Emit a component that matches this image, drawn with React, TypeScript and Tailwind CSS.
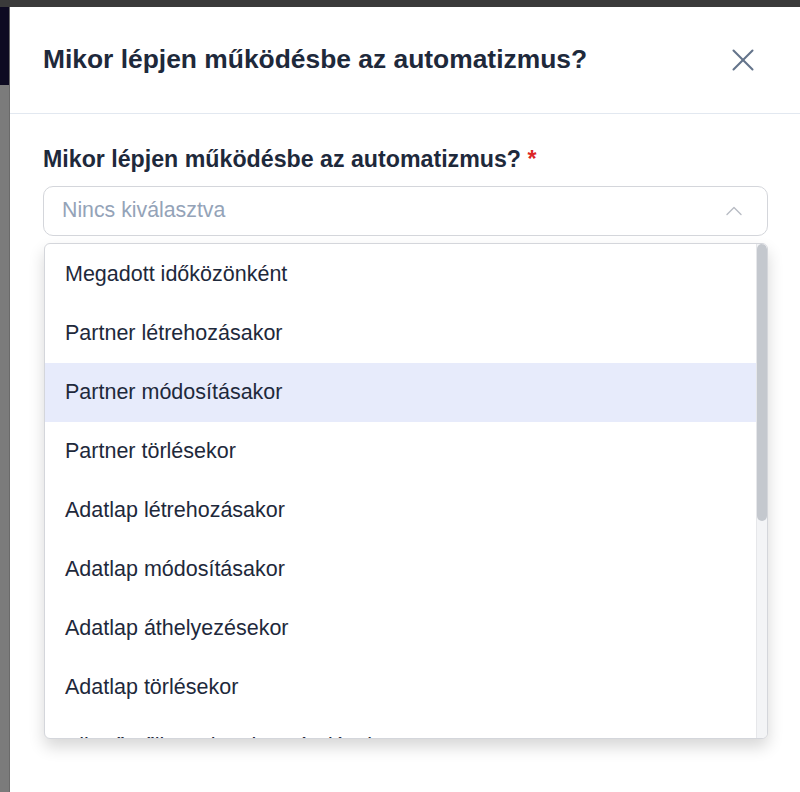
import React from 'react';
import { X, ChevronUp } from 'lucide-react';

const triggers = [
  'Megadott időközönként',
  'Partner létrehozásakor',
  'Partner módosításakor',
  'Partner törlésekor',
  'Adatlap létrehozásakor',
  'Adatlap módosításakor',
  'Adatlap áthelyezésekor',
  'Adatlap törlésekor',
  'Ellenőrzőlista elem hozzáadásakor',
  'Ellenőrzőlista elem törlésekor',
];

export default function App() {
  const [hovered] = React.useState(2);

  return (
    <div
      className="flex h-[792px] w-[800px] flex-col overflow-hidden bg-[#7b7b7b]"
      style={{ fontFamily: '"Liberation Sans", Arial, sans-serif' }}
    >
      {/* dimmed app chrome behind the modal */}
      <div className="h-[7px] shrink-0 bg-[#3a3a3a]" />
      <div className="flex min-h-0 flex-1">
        <div className="flex w-[10px] shrink-0 flex-col border-r border-[#6a6a6a]">
          <div className="h-[78px] bg-[#0e0b22]" />
          <div className="flex-1 bg-[#7b7b7b]" />
        </div>

        <div className="relative flex-1 bg-white">
          <div className="flex h-[107px] items-center justify-between border-b border-[#e2e8f0] pl-[33px] pr-[39px]">
            <h2 className="text-[26.4px] font-bold text-[#1e293b]">Mikor lépjen működésbe az automatizmus?</h2>
            <X className="h-[38px] w-[38px] text-[#64748b]" strokeWidth={1.3} />
          </div>

          <div className="px-[33px] pt-[30px]">
            <label className="block text-[23.2px] font-bold leading-[30px] text-[#1e293b]">
              Mikor lépjen működésbe az automatizmus? <span className="text-[#dc2626]">*</span>
            </label>
            <div className="mt-[12px] flex h-[50px] w-[725px] items-center justify-between rounded-[10px] border border-[#d4d6db] pl-[18px] pr-[19px]">
              <span className="text-[21.3px] text-[#94a3b8]">Nincs kiválasztva</span>
              <ChevronUp className="h-[28px] w-[28px] text-[#b8bcc4]" strokeWidth={1.2} />
            </div>
          </div>

          <div className="absolute left-[34px] top-[236px] h-[496px] w-[724px] overflow-hidden rounded-[6px] border border-[#d4d6db] bg-white shadow-[0_8px_16px_rgba(0,0,0,0.16)]">
            <ul className="pr-[10px] pt-[1px]">
              {triggers.map((t, i) => (
                <li
                  key={t}
                  className={`flex h-[59px] items-center pl-[20px] text-[21.5px] text-[#1e293b] ${i === hovered ? 'bg-[#e7ebfb]' : ''}`}
                >
                  {t}
                </li>
              ))}
            </ul>
            <div className="absolute right-0 top-0 h-full w-[11px] border-l border-[#e6e7ea] bg-[#f3f4f6]">
              <div className="h-[277px] w-full rounded-full bg-[#c4c8ce]" />
            </div>
          </div>
        </div>
      </div>
    </div>
  );
}
